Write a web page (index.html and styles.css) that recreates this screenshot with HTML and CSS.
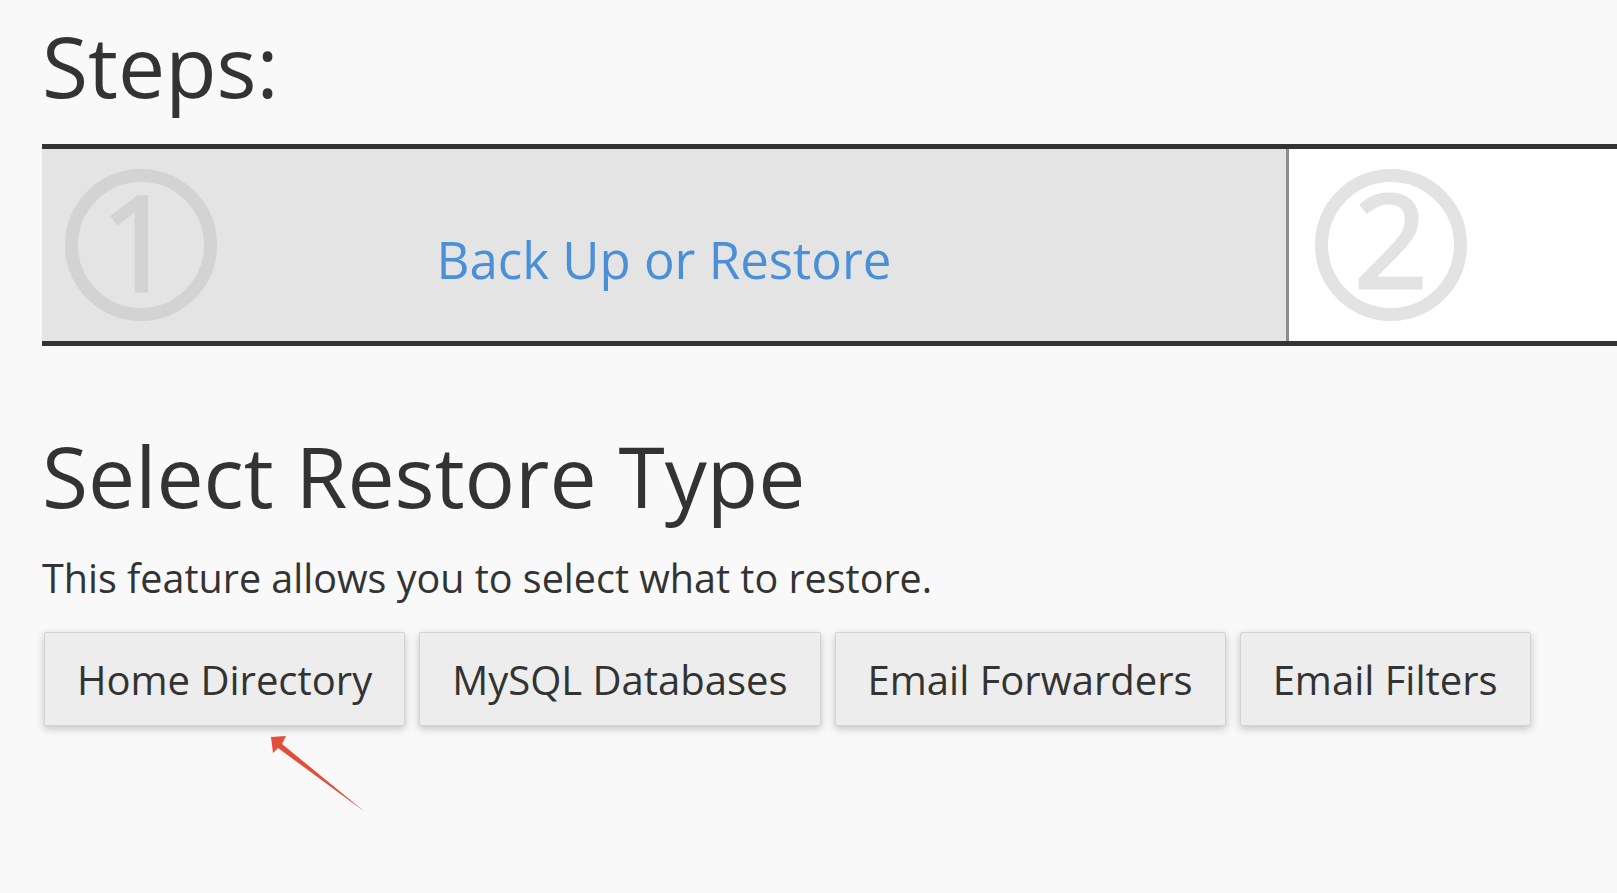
FILE: index.html
```html
<!DOCTYPE html>
<html lang="en">
<head>
<meta charset="utf-8">
<title>Select Restore Type</title>
<link rel="stylesheet" href="styles.css">
</head>
<body>
<div class="page">
  <h1 class="title">Steps:</h1>
  <div class="steps">
    <div class="step step-active">
      <div class="step-num num-active"><span class="digit">1</span></div>
      <a class="step-label" href="#">Back Up or Restore</a>
      <span class="step-spacer"></span>
    </div>
    <div class="step step-next">
      <div class="step-num num-next"><span class="digit">2</span></div>
    </div>
  </div>
  <h2 class="title section-title">Select Restore Type</h2>
  <p class="desc">This feature allows you to select what to restore.</p>
  <div class="buttons">
    <button class="btn">Home Directory</button>
    <button class="btn">MySQL Databases</button>
    <button class="btn">Email Forwarders</button>
    <button class="btn">Email Filters</button>
  </div>
  <svg class="arrow" width="120" height="100" viewBox="0 0 120 100">
    <polygon points="11,9 26,8 22,16 105,84 18,20 13,25" fill="#e44d3a"/>
  </svg>
</div>
</body>
</html>
```
FILE: styles.css
```css
html, body {
  margin: 0;
  padding: 0;
  background: #f9f9f9;
}
body {
  font-family: "Open Sans", "DejaVu Sans", sans-serif;
  color: #333333;
  overflow: hidden;
}
.page {
  position: relative;
  padding: 20px 0 0 42px;
  height: 873px;
}
.title {
  margin: 0;
  font-size: 84px;
  line-height: 92px;
  font-weight: 400;
  color: #333333;
}
.steps {
  margin-top: 32px;
  display: flex;
  border-top: 5px solid #333333;
  border-bottom: 5px solid #333333;
  height: 192px;
}
.step {
  box-sizing: border-box;
  height: 192px;
}
.step-active {
  flex: 0 0 1247px;
  background: #e4e4e4;
  border-right: 3px solid #8c8c8c;
  display: grid;
  grid-template-columns: 152px 1fr 152px;
  padding: 0 23px;
}
.step-next {
  flex: 1;
  background: #ffffff;
  padding-left: 26px;
  display: flex;
  align-items: center;
}
.step-num {
  box-sizing: border-box;
  width: 152px;
  height: 152px;
  border-radius: 50%;
  border: 13px solid #d3d3d3;
  display: flex;
  align-items: center;
  justify-content: center;
  align-self: center;
  padding-bottom: 10px;
}
.digit {
  font-size: 132px;
  line-height: 132px;
  font-weight: 400;
  -webkit-text-stroke: 3px currentColor;
}
.num-active {
  border-color: #d3d3d3;
  color: #d3d3d3;
}
.num-active .digit {
  margin-left: -6px;
}
.num-next {
  border-color: #e3e3e3;
  color: #e3e3e3;
}
.num-next .digit {
  font-size: 130px;
  margin-top: -4px;
}
.step-label {
  align-self: start;
  justify-self: center;
  margin-top: 80px;
  font-size: 51px;
  line-height: 60px;
  color: #4a90d9;
  text-decoration: none;
  white-space: nowrap;
}
.section-title {
  margin-top: 84px;
}
.desc {
  margin: 32px 0 0;
  font-size: 39.5px;
  line-height: 48px;
  color: #333333;
}
.buttons {
  margin: 30px 0 0 2px;
  display: flex;
  gap: 14px;
}
.btn {
  font-family: "Open Sans", sans-serif;
  font-size: 40px;
  line-height: 40px;
  color: #333333;
  background: #ededed;
  border: 1px solid #d3d3d3;
  border-radius: 2px;
  padding: 27px 32px 25px;
  box-shadow: 0 3px 8px rgba(0, 0, 0, 0.22);
  cursor: pointer;
}
.arrow {
  position: absolute;
  left: 260px;
  top: 728px;
}
```
